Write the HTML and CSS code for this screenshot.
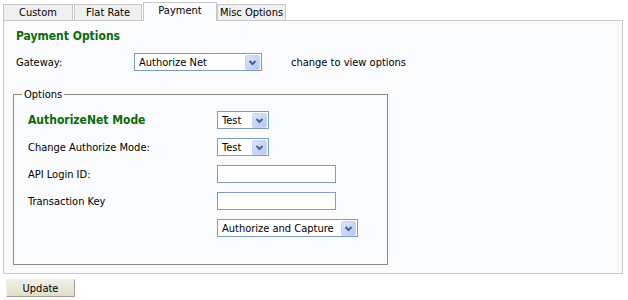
FILE: index.html
```html
<!DOCTYPE html>
<html lang="en">
<head>
    <meta charset="UTF-8">
    <title>Shipping &amp; Payment Settings</title>
    <link rel="stylesheet" href="styles.css">
</head>
<body>
    <div class="page">
        <ul class="tabs">
            <li class="tab tab-custom">Custom</li>
            <li class="tab tab-flat">Flat Rate</li>
            <li class="tab tab-payment active">Payment</li>
            <li class="tab tab-misc">Misc Options</li>
        </ul>
        <div class="panel">
            <h2 class="title">Payment Options</h2>
            <div class="gateway-row">
                <label class="gateway-label">Gateway:</label>
                <span class="select-wrap wide">
                    <select>
                        <option>Authorize Net</option>
                    </select>
                    <svg class="arrow" width="15" height="15" viewBox="0 0 15 15">
                        <defs>
                            <linearGradient id="ag" x1="0" y1="0" x2="1" y2="1">
                                <stop offset="0" stop-color="#dbe6fd"/>
                                <stop offset="1" stop-color="#b1c7f5"/>
                            </linearGradient>
                        </defs>
                        <rect x="0.5" y="0.5" width="14" height="14" rx="1.5" fill="url(#ag)" stroke="#c6d6f7"/>
                        <path d="M4.5 6 L7.5 9 L10.5 6" fill="none" stroke="#4d6185" stroke-width="2"/>
                    </svg>
                </span>
                <span class="hint">change to view options</span>
            </div>

            <fieldset class="options">
                <legend>Options</legend>
                <div class="form-grid">
                    <span class="mode-title">AuthorizeNet Mode</span>
                    <span class="select-wrap small">
                        <select><option>Test</option></select>
                        <svg class="arrow" width="15" height="15" viewBox="0 0 15 15">
                            <rect x="0.5" y="0.5" width="14" height="14" rx="1.5" fill="url(#ag)" stroke="#c6d6f7"/>
                            <path d="M4.5 6 L7.5 9 L10.5 6" fill="none" stroke="#4d6185" stroke-width="2"/>
                        </svg>
                    </span>

                    <label>Change Authorize Mode:</label>
                    <span class="select-wrap small">
                        <select><option>Test</option></select>
                        <svg class="arrow" width="15" height="15" viewBox="0 0 15 15">
                            <rect x="0.5" y="0.5" width="14" height="14" rx="1.5" fill="url(#ag)" stroke="#c6d6f7"/>
                            <path d="M4.5 6 L7.5 9 L10.5 6" fill="none" stroke="#4d6185" stroke-width="2"/>
                        </svg>
                    </span>

                    <label>API Login ID:</label>
                    <input type="text" class="text-input">

                    <label>Transaction Key</label>
                    <input type="text" class="text-input">

                    <span></span>
                    <span class="select-wrap capture">
                        <select><option>Authorize and Capture</option></select>
                        <svg class="arrow" width="15" height="15" viewBox="0 0 15 15">
                            <rect x="0.5" y="0.5" width="14" height="14" rx="1.5" fill="url(#ag)" stroke="#c6d6f7"/>
                            <path d="M4.5 6 L7.5 9 L10.5 6" fill="none" stroke="#4d6185" stroke-width="2"/>
                        </svg>
                    </span>
                </div>
            </fieldset>
        </div>
        <button class="update-btn">Update</button>
    </div>
</body>
</html>
```

FILE: styles.css
```css
body {
    margin: 0;
    background: #fff;
    font-family: "DejaVu Sans Condensed", "Liberation Sans", sans-serif;
    font-size: 11px;
    color: #000;
}

.page {
    padding: 1px 0 0 3px;
}

.tabs {
    display: flex;
    align-items: flex-end;
    list-style: none;
    margin: 0;
    padding: 0;
    height: 19px;
}

.tab {
    box-sizing: border-box;
    height: 16px;
    background: #f0f0f0;
    border: 1px solid #c8c8c8;
    border-bottom: none;
    text-align: center;
    line-height: 16px;
    white-space: nowrap;
}

.tab-custom { width: 70px; }
.tab-flat { width: 68px; margin-left: 1px; }
.tab-payment { width: 74px; margin-left: 1px; }
.tab-misc { width: 69px; }

.tab.active {
    height: 19px;
    background: #fafbfd;
    position: relative;
    margin-bottom: -1px;
    line-height: 15px;
    z-index: 1;
}

.panel {
    box-sizing: border-box;
    width: 620px;
    height: 254px;
    background: #fafbfd;
    border: 1px solid #c8c8c8;
    padding: 7px 0 0 12px;
}

.title {
    margin: 0;
    font-size: 12px;
    font-weight: bold;
    color: #0b6b0b;
    line-height: 16px;
}

.gateway-row {
    display: flex;
    align-items: center;
    margin-top: 9px;
}

.gateway-label {
    width: 118px;
}

.hint {
    margin-left: 29px;
}

.select-wrap {
    position: relative;
    display: inline-block;
    height: 18px;
}

.select-wrap select {
    appearance: none;
    box-sizing: border-box;
    width: 100%;
    height: 18px;
    margin: 0;
    padding: 0 0 0 4px;
    border: 1px solid #7f9db9;
    border-radius: 0;
    background: #fff;
    font-family: inherit;
    font-size: 11px;
    color: #000;
}

.select-wrap .arrow {
    position: absolute;
    right: 2px;
    top: 2px;
    pointer-events: none;
}

.select-wrap.wide { width: 128px; }
.select-wrap.small { width: 52px; }
.select-wrap.capture { width: 141px; }

.options {
    box-sizing: border-box;
    width: 375px;
    height: 177px;
    margin: 17px 0 0 -3px;
    padding: 10px 0 0 14px;
    border: 1px solid #8c8c7e;
}

.options legend {
    padding: 0 2px;
    margin-left: -6px;
}

.form-grid {
    display: grid;
    grid-template-columns: 189px 120px;
    grid-auto-rows: 18px;
    row-gap: 9px;
    align-items: center;
    justify-items: start;
}

.mode-title {
    font-size: 12px;
    font-weight: bold;
    color: #0b6b0b;
}

.text-input {
    box-sizing: border-box;
    width: 119px;
    height: 18px;
    margin: 0;
    border: 1px solid #7f9db9;
    background: #fff;
}

.update-btn {
    box-sizing: border-box;
    width: 69px;
    height: 18px;
    margin: 5px 0 0 3px;
    padding: 0;
    border: 1px solid;
    border-color: #f4f2e6 #a09e92 #a09e92 #f4f2e6;
    background: linear-gradient(#f2f0e4, #e2ddc9);
    font-family: inherit;
    font-size: 11px;
    color: #000;
}
```
